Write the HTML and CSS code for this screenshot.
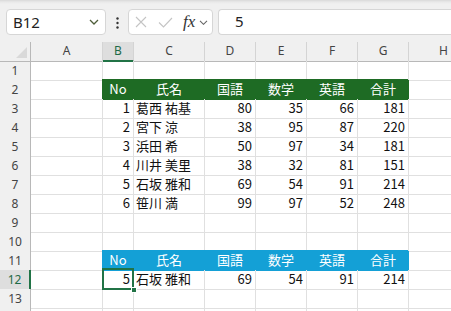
FILE: index.html
```html
<!DOCTYPE html>
<html lang="ja">
<head>
    <meta charset="UTF-8">
    <meta name="viewport" content="width=device-width, initial-scale=1.0">
    <title>Sheet1</title>
    <link rel="stylesheet" href="styles.css">
</head>
<body>
    <div class="topbar">
        <div class="namebox">
            <span>B12</span>
            <svg class="chev" width="10" height="6" viewBox="0 0 10 6"><path d="M1 1l4 4 4-4" fill="none" stroke="#4e5e3a" stroke-width="1.3"/></svg>
        </div>
        <svg class="dots" width="3" height="12" viewBox="0 0 3 12"><circle cx="1.5" cy="1.5" r="1.2" fill="#333"/><circle cx="1.5" cy="6" r="1.2" fill="#333"/><circle cx="1.5" cy="10.5" r="1.2" fill="#333"/></svg>
        <div class="fxbox">
            <svg class="cancel" width="12" height="12" viewBox="0 0 12 12"><path d="M1 1l10 10M11 1L1 11" stroke="#c4c4c4" stroke-width="1.1"/></svg>
            <svg class="enter" width="15" height="11" viewBox="0 0 15 11"><path d="M1 5.5l4.5 4.5L14 1" fill="none" stroke="#c4c4c4" stroke-width="1.1"/></svg>
            <span class="fx">fx</span>
            <svg class="chev-sm" width="9" height="5" viewBox="0 0 9 5"><path d="M1 .8l3.5 3.5L8 .8" fill="none" stroke="#666" stroke-width="1.1"/></svg>
        </div>
        <div class="formula">5</div>
    </div>

    <div class="sheet">
        <div class="row head">
            <div class="corner"></div>
            <div class="ch">A</div>
            <div class="ch on">B</div>
            <div class="ch">C</div>
            <div class="ch">D</div>
            <div class="ch">E</div>
            <div class="ch">F</div>
            <div class="ch">G</div>
            <div class="ch">H</div>
        </div>
        <div class="row">
            <div class="rh">1</div>
            <div class="c"></div><div class="c"></div><div class="c"></div><div class="c"></div>
            <div class="c"></div><div class="c"></div><div class="c"></div><div class="c"></div>
        </div>
        <div class="row">
            <div class="rh">2</div>
            <div class="c"></div>
            <div class="c th green">No</div>
            <div class="c th green">氏名</div>
            <div class="c th green">国語</div>
            <div class="c th green">数学</div>
            <div class="c th green">英語</div>
            <div class="c th green">合計</div>
            <div class="c"></div>
        </div>
        <div class="row">
            <div class="rh">3</div>
            <div class="c"></div>
            <div class="c num">1</div>
            <div class="c txt">葛西 祐基</div>
            <div class="c num">80</div>
            <div class="c num">35</div>
            <div class="c num">66</div>
            <div class="c num">181</div>
            <div class="c"></div>
        </div>
        <div class="row">
            <div class="rh">4</div>
            <div class="c"></div>
            <div class="c num">2</div>
            <div class="c txt">宮下 涼</div>
            <div class="c num">38</div>
            <div class="c num">95</div>
            <div class="c num">87</div>
            <div class="c num">220</div>
            <div class="c"></div>
        </div>
        <div class="row">
            <div class="rh">5</div>
            <div class="c"></div>
            <div class="c num">3</div>
            <div class="c txt">浜田 希</div>
            <div class="c num">50</div>
            <div class="c num">97</div>
            <div class="c num">34</div>
            <div class="c num">181</div>
            <div class="c"></div>
        </div>
        <div class="row">
            <div class="rh">6</div>
            <div class="c"></div>
            <div class="c num">4</div>
            <div class="c txt">川井 美里</div>
            <div class="c num">38</div>
            <div class="c num">32</div>
            <div class="c num">81</div>
            <div class="c num">151</div>
            <div class="c"></div>
        </div>
        <div class="row">
            <div class="rh">7</div>
            <div class="c"></div>
            <div class="c num">5</div>
            <div class="c txt">石坂 雅和</div>
            <div class="c num">69</div>
            <div class="c num">54</div>
            <div class="c num">91</div>
            <div class="c num">214</div>
            <div class="c"></div>
        </div>
        <div class="row">
            <div class="rh">8</div>
            <div class="c"></div>
            <div class="c num">6</div>
            <div class="c txt">笹川 満</div>
            <div class="c num">99</div>
            <div class="c num">97</div>
            <div class="c num">52</div>
            <div class="c num">248</div>
            <div class="c"></div>
        </div>
        <div class="row">
            <div class="rh">9</div>
            <div class="c"></div><div class="c"></div><div class="c"></div><div class="c"></div>
            <div class="c"></div><div class="c"></div><div class="c"></div><div class="c"></div>
        </div>
        <div class="row">
            <div class="rh">10</div>
            <div class="c"></div><div class="c"></div><div class="c"></div><div class="c"></div>
            <div class="c"></div><div class="c"></div><div class="c"></div><div class="c"></div>
        </div>
        <div class="row">
            <div class="rh">11</div>
            <div class="c"></div>
            <div class="c th blue">No</div>
            <div class="c th blue">氏名</div>
            <div class="c th blue">国語</div>
            <div class="c th blue">数学</div>
            <div class="c th blue">英語</div>
            <div class="c th blue">合計</div>
            <div class="c"></div>
        </div>
        <div class="row">
            <div class="rh on">12</div>
            <div class="c"></div>
            <div class="c num sel">5</div>
            <div class="c txt">石坂 雅和</div>
            <div class="c num">69</div>
            <div class="c num">54</div>
            <div class="c num">91</div>
            <div class="c num">214</div>
            <div class="c"></div>
        </div>
        <div class="row">
            <div class="rh">13</div>
            <div class="c"></div><div class="c"></div><div class="c"></div><div class="c"></div>
            <div class="c"></div><div class="c"></div><div class="c"></div><div class="c"></div>
        </div>
        <div class="row">
            <div class="rh"></div>
            <div class="c"></div><div class="c"></div><div class="c"></div><div class="c"></div>
            <div class="c"></div><div class="c"></div><div class="c"></div><div class="c"></div>
        </div>
    </div>
</body>
</html>
```

FILE: styles.css
```css
:root {
    --chrome: #f0f0f0;
    --grid: #e0e0e0;
    --head-line: #d4d4d4;
    --head-edge: #b8b8b8;
    --select: #217346;
    --green: #1e6b24;
    --blue: #14a0d6;
}

* {
    margin: 0;
    padding: 0;
    box-sizing: border-box;
}

body {
    width: 451px;
    height: 311px;
    overflow: hidden;
    background: #fff;
    font-family: "Noto Sans CJK JP", sans-serif;
    color: #111;
}

/* formula bar */
.topbar {
    height: 42px;
    display: flex;
    align-items: flex-start;
    padding: 9px 0 0 6px;
    background: linear-gradient(#d9d9d9 0, #e9e9e9 2px, var(--chrome) 4px);
}

.namebox {
    width: 100px;
    height: 26px;
    display: flex;
    align-items: center;
    justify-content: space-between;
    padding: 0 6px 0 6px;
    background: #fff;
    border: 1px solid #d6d6d6;
    border-radius: 4px;
    font-family: "Noto Sans", sans-serif;
    font-size: 15px;
    color: #222;
}

.dots {
    margin: 8px 9px 0 10px;
}

.fxbox {
    width: 85px;
    height: 26px;
    display: flex;
    align-items: center;
    padding-left: 6px;
    background: #fff;
    border: 1px solid #d6d6d6;
    border-radius: 4px;
}

.enter {
    margin-left: 11px;
}

.fx {
    margin-left: 10px;
    font-family: "Liberation Serif", serif;
    font-style: italic;
    font-size: 17px;
    line-height: 20px;
    color: #333;
}

.chev-sm {
    margin-left: 4px;
}

.formula {
    flex: 1;
    height: 26px;
    margin-left: 5px;
    padding-left: 16px;
    background: #fff;
    border: 1px solid #d6d6d6;
    border-right: none;
    border-radius: 4px 0 0 4px;
    font-family: "Noto Sans", sans-serif;
    font-size: 15px;
    line-height: 23px;
    color: #222;
}

/* grid */
.sheet {
    overflow: hidden;
}

.row {
    display: grid;
    grid-template-columns: 31px 72px 31px 71px 51px 51px 51px 51px 70px;
    height: 19px;
}

.corner {
    position: relative;
    background: var(--chrome);
    border-right: 1px solid var(--head-edge);
    border-bottom: 1px solid var(--head-edge);
}

.corner::after {
    content: "";
    position: absolute;
    right: 3px;
    bottom: 3px;
    border-left: 11px solid transparent;
    border-bottom: 11px solid #d9d9d9;
}

.ch {
    background: var(--chrome);
    border-right: 1px solid var(--head-line);
    border-bottom: 1px solid var(--head-edge);
    text-align: center;
    font-family: "Noto Sans", sans-serif;
    font-size: 12px;
    line-height: 18px;
    color: #444;
}

.ch.on {
    background: #dedede;
    border-bottom: 2px solid var(--select);
    color: #1e6b47;
}

.rh {
    background: var(--chrome);
    border-right: 1px solid var(--head-edge);
    border-bottom: 1px solid var(--head-line);
    text-align: center;
    font-family: "Noto Sans", sans-serif;
    font-size: 12px;
    line-height: 19px;
    color: #444;
}

.rh.on {
    background: #dedede;
    border-right: 2px solid var(--select);
    color: #1e6b47;
}

.c {
    border-right: 1px solid var(--grid);
    border-bottom: 1px solid var(--grid);
    font-size: 13px;
    line-height: 18px;
    white-space: nowrap;
}

.num {
    text-align: right;
    padding-right: 3px;
}

.txt {
    padding-left: 2px;
}

.th {
    text-align: center;
    color: #fff;
}

.green {
    background: var(--green);
    border-color: var(--green);
    box-shadow: -1px -1px 0 var(--green);
}

.blue {
    background: var(--blue);
    border-color: var(--blue);
    box-shadow: -1px -1px 0 var(--blue);
}

/* active cell */
.sel {
    position: relative;
}

.sel::before {
    content: "";
    position: absolute;
    left: -1px;
    top: -2px;
    right: -1px;
    bottom: -1px;
    border: 2px solid var(--select);
}

.sel::after {
    content: "";
    position: absolute;
    right: -4px;
    bottom: -4px;
    width: 4px;
    height: 4px;
    box-sizing: content-box;
    background: var(--select);
    border: 1px solid #fff;
}
```
